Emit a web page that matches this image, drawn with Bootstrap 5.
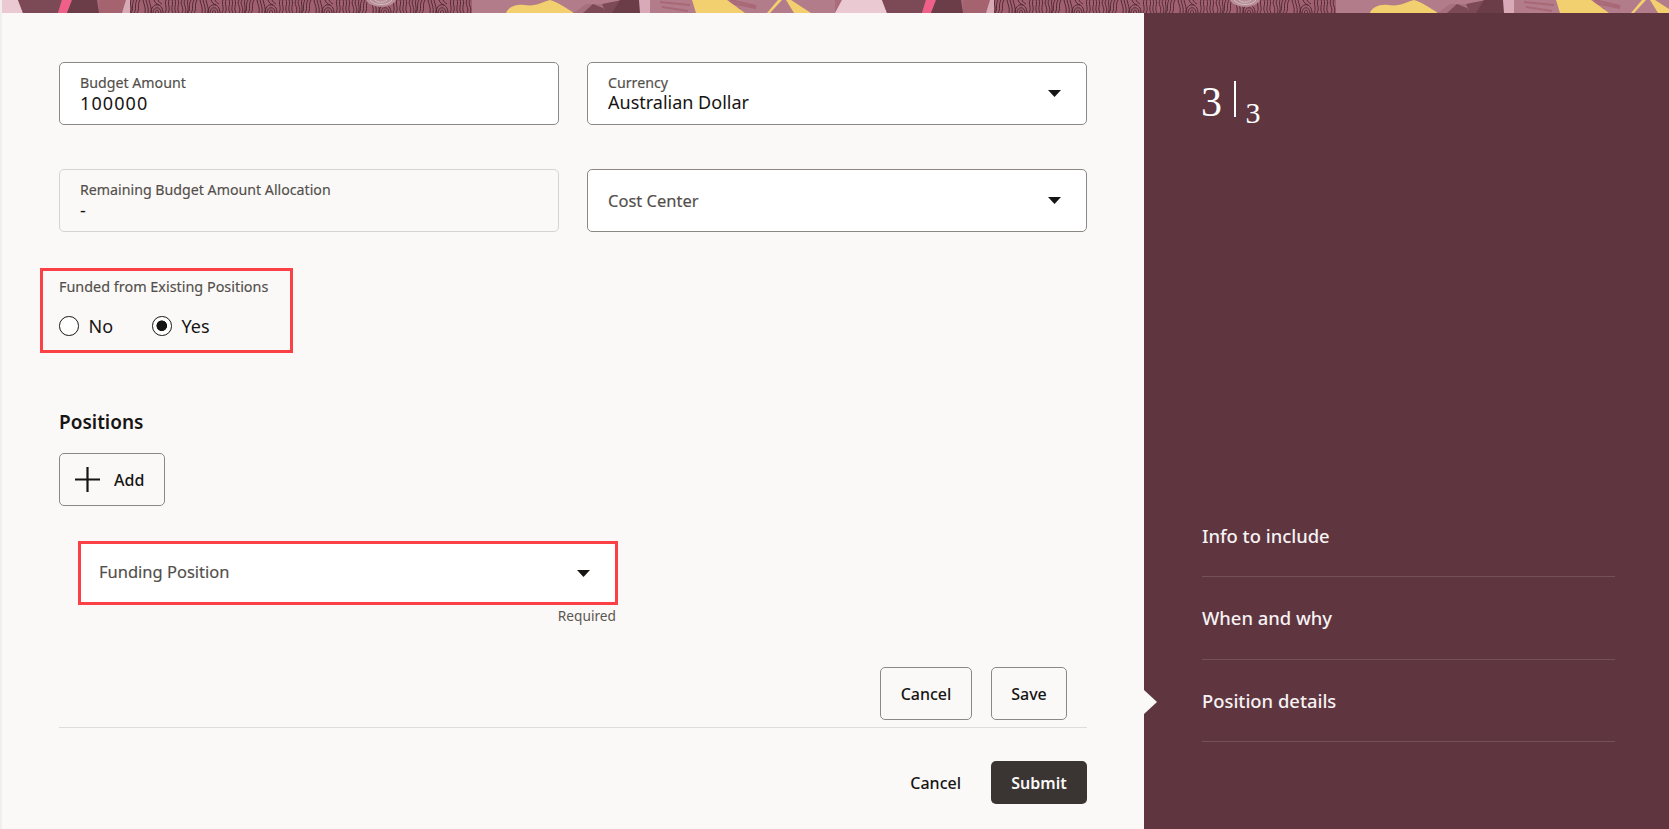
<!DOCTYPE html>
<html lang="en">
<head>
<meta charset="utf-8">
<title>Position details</title>
<link href="https://cdn.jsdelivr.net/npm/bootstrap@5.3.0/dist/css/bootstrap.min.css" rel="stylesheet">
<style>
html,body{height:829px;overflow:hidden}
body{font-family:"Noto Sans","Open Sans",sans-serif;background:#f1efee;color:#161513;padding-left:2px}
.art-band{display:block;width:100%;height:13px}
.shell{height:816px}
.main-pane{width:1142px;background:#fbf9f8;padding:49px 57px 0 57px}
.side-pane{width:525px;background:#5f3640;color:#f7f2f3;padding:68px 54px 87px 58px;position:relative}
.form-grid{--bs-gutter-x:28px;--bs-gutter-y:44px}
.field-box{height:63px;background:#fff;border:1px solid #8c8985;border-radius:5px;padding:0 25px 0 20px}
.field-box.is-readonly{background:transparent;border-color:#d6d3d0}
.field-label{font-size:14.2px;line-height:16px;color:#524e4a;margin-top:12px;-webkit-text-stroke:.15px #524e4a}
.field-value{font-size:18px;line-height:22px;color:#161513;margin-top:1px}
.digits-val{letter-spacing:1.1px}
.select-stack .field-label{margin-top:1px}
.select-stack .field-value{margin-top:0}
.field-ph{font-size:16.5px;line-height:22px;color:#524e4a;-webkit-text-stroke:.15px #524e4a;padding-top:1px}
.fund-box .field-ph{padding-top:0;padding-bottom:2px}
.caret-ic{width:13px;height:7px;flex:none;fill:#161513}
.red-frame{border:3px solid #fb4145}
.radio-frame{width:253px;height:85px;margin:36px 0 0 -19px;padding:7px 0 0 16px}
.radio-title{font-size:14.4px;line-height:18px;color:#524e4a;-webkit-text-stroke:.15px #524e4a}
.radio-line{margin-top:19px;gap:39px}
.radio-line .form-check{margin:0;padding:0;min-height:0;gap:10px}
.radio-line .form-check-input{float:none;margin:0;width:19.5px;height:19.5px;border:1.5px solid #161513;background-color:#fff;background-image:none;box-shadow:none}
.radio-line .form-check-input:checked{background-color:#fff;border-color:#161513;background-image:radial-gradient(circle,#161513 0 5px,transparent 5.6px)}
.radio-line .form-check-label{font-size:18px;line-height:22px}
.pos-title{font-size:19px;line-height:24px;font-weight:600;margin:57px 0 19px;color:#161513}
.plain-btn{background:transparent;border:1px solid #8c8985;border-radius:5px;color:#161513;font-size:16px;font-weight:500;height:53px;padding:0;display:inline-flex;align-items:center;justify-content:center}
.plain-btn:hover{background:transparent;color:#161513;border-color:#8c8985}
.add-btn{width:106px;gap:14px;justify-content:flex-start;padding-left:15px}
.plus-ic{width:25px;height:25px;stroke:#161513;stroke-width:2.2;fill:none}
.fund-wrap{width:540px;margin:35px 0 0 19px}
.fund-box{height:64px;background:#fff;padding:0 25px 0 18px}
.req-note{font-size:13.7px;line-height:18px;color:#5b5652;text-align:right;padding:2px 2px 0 0}
.save-row{margin-top:42px;padding-right:20px;gap:19px}
.btn-cancel{width:92px}
.btn-save{width:76px}
.rule-line{height:1px;background:#dfdcd9;margin-top:7px}
.submit-row{margin-top:33px;gap:30px}
.link-cancel{font-size:16px;font-weight:500;color:#161513;padding:0;border:0;background:transparent}
.btn-submit{width:96px;height:43px;padding:0;border:0;border-radius:5px;background:#3a3532;color:#fbf9f8;font-size:16px;font-weight:600}
.btn-submit:hover{background:#3a3532;color:#fbf9f8}
.step-count{font-family:"Liberation Serif",serif;color:#fff;height:42px;line-height:1}
.step-now{font-size:42px;line-height:42px;width:32px;margin-left:-1px;margin-right:1px}
.step-bar{width:1.5px;height:36px;background:#fff}
.step-all{font-size:30px;line-height:30px;margin:17px 0 0 10px}
.step-list{margin:0;padding:0;list-style:none}
.step-item{height:82.33px;border-bottom:1px solid #74505a;font-size:18.4px;font-weight:500;color:#f7f2f3}
.step-pointer{position:absolute;left:0;top:677px;width:13px;height:24px;fill:#fbf9f8}
</style>
</head>
<body>
<svg class="art-band" viewBox="0 0 1667 13" preserveAspectRatio="xMinYMin slice" xmlns="http://www.w3.org/2000/svg" aria-hidden="true">
  <defs>
    <pattern id="prints" width="57" height="13" patternUnits="userSpaceOnUse">
      <g fill="none" stroke="#46222d" stroke-width=".9">
        <path d="M1 0c2 4-2 8 1 13M4 0c2 4-2 8 1 13M7 0c2 4-2 8 1 13M11 0c-3 4 3 8 0 13M14 0c-3 4 3 8 0 13M17 0c-2 4 2 8-1 13M20 0c-3 5 0 9-3 13M23 0c-3 5 0 9-3 13M26 0c-3 5 0 9-3 13"/>
        <path d="M29 0c1 5 3 8 2 13M32 0c1 5 3 8 2 13M35 0c1 5 3 8 2 13"/>
        <path d="M39 13c0-7 8-7 8 0M41.500 13c0-4 3-4 3 0M37 13c0-11 12-11 12 0M40 0c1 3 3 4 5 5M44 0c1 2 2 3 4 4M52 0c-2 4 2 8-1 13M55 0c-2 4 2 8-1 13"/>
      </g>
    </pattern>
    <g id="art-tile">
      <rect width="864" height="13" fill="#ab6c7a"/>
      <path d="M0 0H18L23 13H0Z" fill="#ebc9d2"/>
      <path d="M18 0H62L58 13H23Z" fill="#7c4a56"/>
      <path d="M62 0H72L67 13H58Z" fill="#ee6088"/>
      <path d="M72 0H97L99 13H67Z" fill="#6a3d49"/>
      <path d="M99 0H126L124 13H99Z" fill="#a5636f"/>
      <path d="M126 0H136L130 13H122Z" fill="#d8a9b6"/>
      <rect x="130" width="342" height="13" fill="#a0606f"/>
      <rect x="130" width="342" height="13" fill="url(#prints)"/>
      <path d="M366 0c4 9 26 9 30 0" fill="#b78f99"/>
      <path d="M370 0c4 6 18 6 22 0M375 0c3 3 8 3 12 0" fill="none" stroke="#efe3e5" stroke-width=".7" opacity=".7"/>
      <rect x="472" width="170" height="13" fill="#b27c8b"/>
      <path d="M506 13c2-6 10-9 18-8 12 2 18-3 26-5 8 2 16 8 24 13Z" fill="#f3d06f"/>
      <path d="M572 13c6-2 8-5 14-9h18c-2 3 4 5 4 9Z" fill="#a8707f"/>
      <path d="M583 13l10-9 10 4 4 5Z" fill="#7c4a56"/>
      <path d="M602 4L622 0H640V13H606Z" fill="#7c4a56"/>
      <path d="M620 0H640V13H612Z" fill="#6a3d49"/>
      <path d="M639 0H650L655 13H640Z" fill="#d8a9b6"/>
      <rect x="650" width="185" height="13" fill="#b27c8b"/>
      <path d="M660 2l30 3M662 7l26 4M700 0l40 9M716 0l40 8M730 0l26 6" stroke="#a5636f" stroke-width="2" fill="none" opacity=".8"/>
      <path d="M692 0H727L745 13H696Z" fill="#f3d06f"/>
      <path d="M778 0h4L770 13h-3Z" fill="#f3d06f"/>
      <path d="M786 0h5L811 13H794Z" fill="#f3d06f"/>
      <path d="M842 0H864V13H835Z" fill="#ebc9d2"/>
    </g>
  </defs>
  <use href="#art-tile" x="-2"/>
  <use href="#art-tile" x="862"/>
</svg>
<div class="shell d-flex">
  <main class="main-pane">
    <div class="row form-grid">
      <div class="col-6">
        <div class="field-box">
          <div class="field-label">Budget Amount</div>
          <div class="field-value digits-val">100000</div>
        </div>
      </div>
      <div class="col-6">
        <div class="field-box d-flex align-items-center justify-content-between">
          <div class="select-stack">
            <div class="field-label">Currency</div>
            <div class="field-value">Australian Dollar</div>
          </div>
          <svg class="caret-ic" viewBox="0 0 13 7"><path d="M0 0H13L6.500 7Z"/></svg>
        </div>
      </div>
      <div class="col-6">
        <div class="field-box is-readonly">
          <div class="field-label">Remaining Budget Amount Allocation</div>
          <div class="field-value">-</div>
        </div>
      </div>
      <div class="col-6">
        <div class="field-box d-flex align-items-center justify-content-between">
          <div class="field-ph">Cost Center</div>
          <svg class="caret-ic" viewBox="0 0 13 7"><path d="M0 0H13L6.500 7Z"/></svg>
        </div>
      </div>
    </div>

    <div class="red-frame radio-frame">
      <div class="radio-title">Funded from Existing Positions</div>
      <div class="radio-line d-flex">
        <div class="form-check d-flex align-items-center">
          <input class="form-check-input" type="radio" name="funded" id="fundNo">
          <label class="form-check-label" for="fundNo">No</label>
        </div>
        <div class="form-check d-flex align-items-center">
          <input class="form-check-input" type="radio" name="funded" id="fundYes" checked>
          <label class="form-check-label" for="fundYes">Yes</label>
        </div>
      </div>
    </div>

    <div class="pos-title">Positions</div>
    <button type="button" class="btn plain-btn add-btn">
      <svg class="plus-ic" viewBox="0 0 25 25"><path d="M12.500 0V25M0 12.500H25"/></svg>
      <span>Add</span>
    </button>

    <div class="fund-wrap">
      <div class="red-frame fund-box d-flex align-items-center justify-content-between">
        <div class="field-ph">Funding Position</div>
        <svg class="caret-ic" viewBox="0 0 13 7"><path d="M0 0H13L6.500 7Z"/></svg>
      </div>
      <div class="req-note">Required</div>
    </div>

    <div class="save-row d-flex justify-content-end">
      <button type="button" class="btn plain-btn btn-cancel">Cancel</button>
      <button type="button" class="btn plain-btn btn-save">Save</button>
    </div>
    <div class="rule-line"></div>
    <div class="submit-row d-flex justify-content-end align-items-center">
      <button type="button" class="btn link-cancel">Cancel</button>
      <button type="button" class="btn btn-submit">Submit</button>
    </div>
  </main>
  <aside class="side-pane d-flex flex-column justify-content-between">
    <div class="step-count d-flex align-items-start">
      <span class="step-now">3</span>
      <span class="step-bar"></span>
      <span class="step-all">3</span>
    </div>
    <ul class="step-list">
      <li class="step-item d-flex align-items-center">Info to include</li>
      <li class="step-item d-flex align-items-center">When and why</li>
      <li class="step-item d-flex align-items-center">Position details</li>
    </ul>
    <svg class="step-pointer" viewBox="0 0 13 24"><path d="M0 0L13 12L0 24Z"/></svg>
  </aside>
</div>
<script src="https://cdn.jsdelivr.net/npm/bootstrap@5.3.0/dist/js/bootstrap.bundle.min.js"></script>
</body>
</html>
